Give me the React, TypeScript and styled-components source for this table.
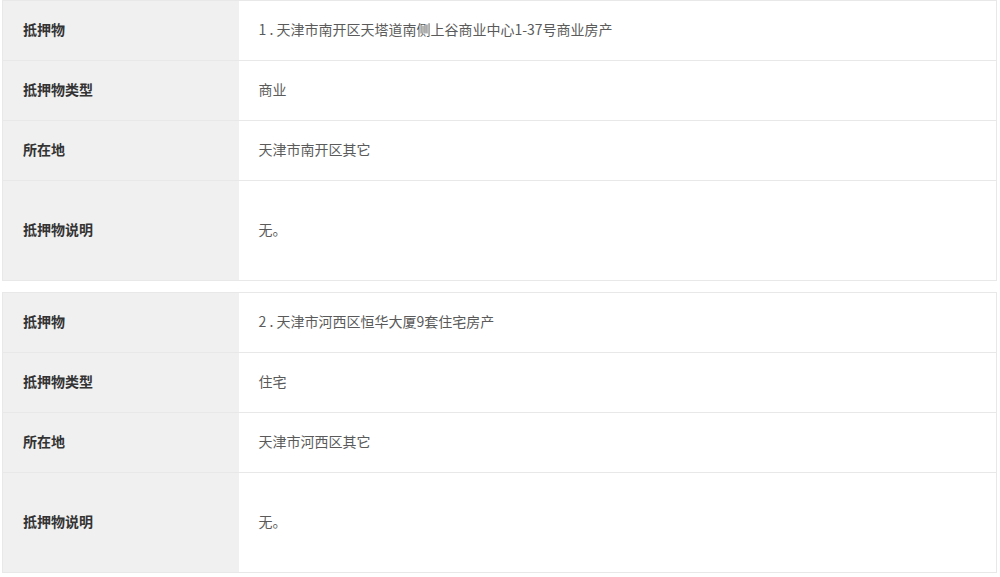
import styled, { createGlobalStyle } from 'styled-components';

const GlobalStyle = createGlobalStyle`
  body {
    margin: 0;
    background: #ffffff;
    font-family: "Noto Sans CJK SC", "Liberation Sans", sans-serif;
  }
`;

type Pledge = {
  name: string;
  kind: string;
  location: string;
  note: string;
};

const pledges: Pledge[] = [
  {
    name: '1 . 天津市南开区天塔道南侧上谷商业中心1-37号商业房产',
    kind: '商业',
    location: '天津市南开区其它',
    note: '无。',
  },
  {
    name: '2 . 天津市河西区恒华大厦9套住宅房产',
    kind: '住宅',
    location: '天津市河西区其它',
    note: '无。',
  },
];

const Page = styled.div`
  display: flex;
  flex-direction: column;
  gap: 11px;
  padding: 0 3px 0 2px;
`;

const Table = styled.table`
  width: 100%;
  border-collapse: collapse;
  border: 1px solid #e8e8e8;
  table-layout: fixed;
`;

const Row = styled.tr<{ tall?: boolean }>`
  height: ${({ tall }) => (tall ? '100px' : '60px')};
  border-bottom: 1px solid #e8e8e8;
`;

const Label = styled.th`
  width: 236px;
  background: #f0f0f0;
  color: #333333;
  font-size: 14px;
  font-weight: bold;
  text-align: left;
  padding: 0 0 3px 20px;
  box-sizing: border-box;
`;

const Value = styled.td`
  background: #ffffff;
  color: #5a5a5a;
  font-size: 14px;
  padding: 0 0 3px 20px;
`;

const PledgeTable = ({ item }: { item: Pledge }) => (
  <Table>
    <tbody>
      <Row>
        <Label>抵押物</Label>
        <Value>{item.name}</Value>
      </Row>
      <Row>
        <Label>抵押物类型</Label>
        <Value>{item.kind}</Value>
      </Row>
      <Row>
        <Label>所在地</Label>
        <Value>{item.location}</Value>
      </Row>
      <Row tall>
        <Label>抵押物说明</Label>
        <Value>{item.note}</Value>
      </Row>
    </tbody>
  </Table>
);

export default function App() {
  return (
    <>
      <GlobalStyle />
      <Page>
        {pledges.map((p) => (
          <PledgeTable key={p.name} item={p} />
        ))}
      </Page>
    </>
  );
}
